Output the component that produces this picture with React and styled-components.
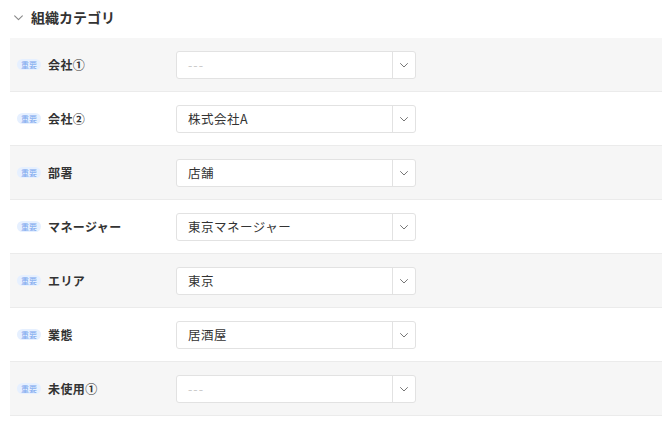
import React from 'react';
import styled, { createGlobalStyle } from 'styled-components';

const Global = createGlobalStyle`
  body {
    margin: 0;
    background: #fff;
    font-family: "Noto Sans CJK JP", "Noto Sans", sans-serif;
    color: #333;
  }
`;

const Page = styled.div`
  padding: 0 8px 0 10px;
`;

const Header = styled.div`
  display: flex;
  align-items: center;
  height: 34px;
  padding-left: 3px;
  gap: 7px;
  font-size: 14px;
  font-weight: 700;
  color: #333;
  margin-bottom: 4px;
`;

const Row = styled.div`
  display: flex;
  align-items: center;
  height: 53px;
  background: ${p => (p.$shaded ? '#f6f6f6' : '#fff')};
  border-bottom: 1px solid #ebebeb;
`;

const LabelCell = styled.div`
  display: flex;
  align-items: center;
  width: 166px;
  padding-left: 7px;
  box-sizing: border-box;
  gap: 7px;
`;

const Badge = styled.span`
  display: inline-flex;
  align-items: center;
  justify-content: center;
  width: 24px;
  height: 11px;
  border-radius: 6px;
  background: #e6f0ff;
  color: #7aa6ee;
  font-size: 8px;
  line-height: 1;
`;

const Label = styled.span`
  font-size: 12px;
  font-weight: 700;
  color: #333;
  letter-spacing: 0.4px;
`;

const Select = styled.div`
  display: flex;
  width: 240px;
  height: 28px;
  box-sizing: border-box;
  background: #fff;
  border: 1px solid #e2e2e2;
  border-radius: 3px;
`;

const Value = styled.div`
  flex: 1;
  display: flex;
  align-items: center;
  padding-left: 11px;
  font-size: 12.5px;
  color: ${p => (p.$empty ? '#c8c8c8' : '#333')};
  letter-spacing: ${p => (p.$empty ? '1px' : '0.5px')};
`;

const Toggle = styled.div`
  width: 22px;
  display: flex;
  align-items: center;
  justify-content: center;
  border-left: 1px solid #e2e2e2;
`;

const Chevron = ({ size = 10, color = '#777' }) => (
  <svg width={size} height={size} viewBox="0 0 10 10" fill="none">
    <path d="M1.5 3.5 L5 7 L8.5 3.5" stroke={color} strokeWidth="1" strokeLinecap="round" strokeLinejoin="round" />
  </svg>
);

const rows = [
  { label: '会社①', value: '' },
  { label: '会社②', value: '株式会社A' },
  { label: '部署', value: '店舗' },
  { label: 'マネージャー', value: '東京マネージャー' },
  { label: 'エリア', value: '東京' },
  { label: '業態', value: '居酒屋' },
  { label: '未使用①', value: '' },
];

export default function App() {
  return (
    <Page>
      <Global />
      <Header>
        <Chevron size={11} color="#888" />
        <span>組織カテゴリ</span>
      </Header>
      {rows.map((r, i) => (
        <Row key={r.label} $shaded={i % 2 === 0}>
          <LabelCell>
            <Badge>重要</Badge>
            <Label>{r.label}</Label>
          </LabelCell>
          <Select>
            <Value $empty={!r.value}>{r.value || '---'}</Value>
            <Toggle>
              <Chevron />
            </Toggle>
          </Select>
        </Row>
      ))}
    </Page>
  );
}
